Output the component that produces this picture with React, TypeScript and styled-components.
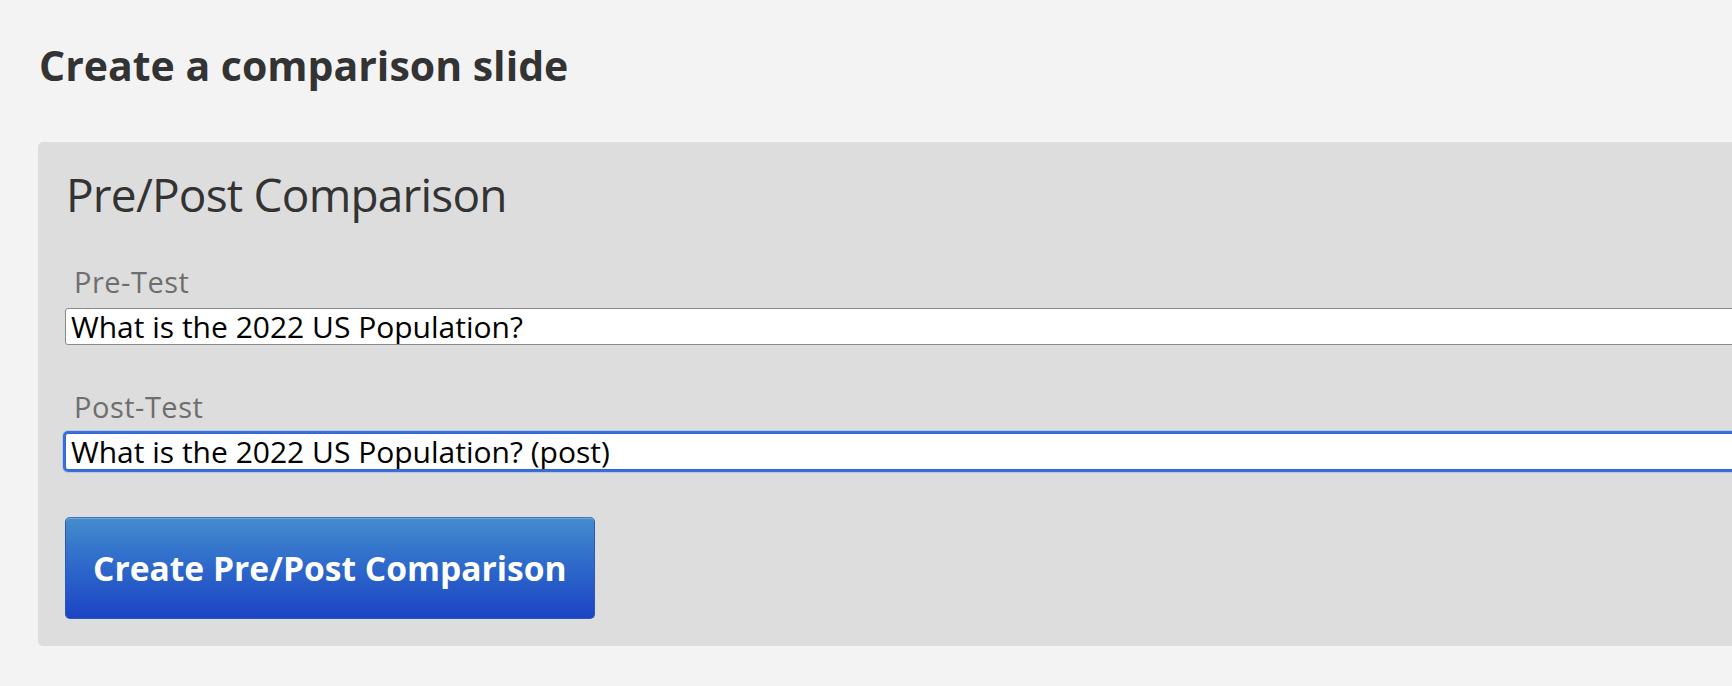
import React from "react";
import styled, { createGlobalStyle } from "styled-components";

const FONT = `"Open Sans", "DejaVu Sans", "Lucida Grande", Verdana, sans-serif`;

const Global = createGlobalStyle`
  html, body {
    margin: 0;
    padding: 0;
    background: #f3f3f3;
    overflow: hidden;
  }
  body {
    font-family: ${FONT};
    color: #333333;
  }
`;

const Page = styled.div`
  width: 1732px;
  height: 686px;
  overflow: hidden;
  padding: 41px 0 0 38px;
  box-sizing: border-box;
`;

const Heading = styled.h1`
  margin: 0 0 53px 1px;
  font-size: 41px;
  line-height: 48px;
  font-weight: bold;
  color: #333333;
  white-space: nowrap;
`;

const Panel = styled.section`
  width: 1800px;
  box-sizing: border-box;
  background: #dddddd;
  border-radius: 5px;
  padding: 25px 27px 27px 27px;
  display: flex;
  flex-direction: column;
`;

const Title = styled.h2`
  margin: 0 0 44px 1px;
  font-size: 46px;
  line-height: 54px;
  letter-spacing: -0.8px;
  font-weight: normal;
  color: #333333;
  white-space: nowrap;
`;

const Field = styled.div<{ $gap: number }>`
  display: flex;
  flex-direction: column;
  margin-bottom: ${(p) => p.$gap}px;
`;

const Label = styled.label`
  margin: 0 0 9px 9px;
  font-size: 29px;
  line-height: 34px;
  letter-spacing: 0.5px;
  color: #6e6e6e;
  white-space: nowrap;
`;

const TextInput = styled.input<{ $focused?: boolean }>`
  box-sizing: border-box;
  width: 100%;
  height: 37px;
  margin: 0;
  padding: 0 5px;
  font-family: ${FONT};
  font-size: 30px;
  color: #000000;
  background: #ffffff;
  border: 1px solid ${(p) => (p.$focused ? "#2f66d0" : "#8a8a8a")};
  border-radius: 3px;
  outline: none;
  box-shadow: ${(p) =>
    p.$focused ? "0 0 0 2px #3a6fd6, 0 0 0 3px #b9c9e8" : "none"};
`;

const Button = styled.button`
  align-self: flex-start;
  height: 102px;
  padding: 0 27px;
  margin: 0;
  font-family: ${FONT};
  font-size: 33.6px;
  font-weight: bold;
  color: #ffffff;
  background: linear-gradient(to bottom, #458dcd 0%, #3272cc 35%, #1c44c4 100%);
  border: 1px solid #2a58b8;
  border-top-color: #3b78bd;
  border-radius: 5px;
  box-shadow: inset 0 1px 0 rgba(255, 255, 255, 0.25);
  white-space: nowrap;
  cursor: pointer;
`;

export default function App() {
  return (
    <>
      <Global />
      <Page>
        <Heading>Create a comparison slide</Heading>
        <Panel>
          <Title>Pre/Post Comparison</Title>
          <Field $gap={45}>
            <Label>Pre-Test</Label>
            <TextInput defaultValue="What is the 2022 US Population?" />
          </Field>
          <Field $gap={47}>
            <Label>Post-Test</Label>
            <TextInput $focused defaultValue="What is the 2022 US Population? (post)" />
          </Field>
          <Button>Create Pre/Post Comparison</Button>
        </Panel>
      </Page>
    </>
  );
}
